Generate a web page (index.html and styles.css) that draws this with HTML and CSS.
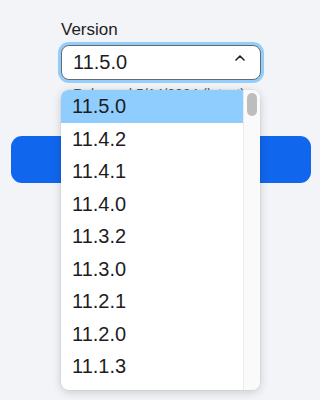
FILE: index.html
```html
<!DOCTYPE html>
<html>
<head>
<meta charset="utf-8">
<link rel="stylesheet" href="styles.css">
</head>
<body>
<div class="page">
  <div class="field">
    <label class="label">Version</label>
    <div class="select">
      <span class="value">11.5.0</span>
      <svg class="caret" width="10" height="6" viewBox="0 0 10 6"><path d="M1 5 L5 1 L9 5" fill="none" stroke="#222" stroke-width="1.6" stroke-linecap="round" stroke-linejoin="round"/></svg>
    </div>
    <div class="hint">Released 5/14/2024 (latest)</div>
  </div>
  <button class="primary">Install</button>
  <div class="dropdown">
    <ul class="list">
      <li class="item selected">11.5.0</li>
      <li class="item">11.4.2</li>
      <li class="item">11.4.1</li>
      <li class="item">11.4.0</li>
      <li class="item">11.3.2</li>
      <li class="item">11.3.0</li>
      <li class="item">11.2.1</li>
      <li class="item">11.2.0</li>
      <li class="item">11.1.3</li>
    </ul>
    <div class="scrollbar"><div class="thumb"></div></div>
  </div>
</div>
</body>
</html>
```
FILE: styles.css
```css
html, body {
  margin: 0;
  padding: 0;
  background: #f3f4f8;
  font-family: "Liberation Sans", Arial, sans-serif;
}
.page {
  position: relative;
  width: 315px;
  height: 400px;
  display: flex;
  flex-direction: column;
}
.field {
  display: flex;
  flex-direction: column;
  padding: 20px 0 0 61px;
  width: 200px;
}
.label {
  font-size: 17px;
  line-height: 20px;
  color: #1d1d1f;
  margin-bottom: 5px;
}
.select {
  box-sizing: border-box;
  height: 35px;
  border: 1.5px solid #6a6a6a;
  border-radius: 8px;
  background: #fff;
  box-shadow: 0 0 0 3px #93cdfb;
  display: flex;
  align-items: center;
  justify-content: space-between;
  padding: 0 15px 0 11px;
}
.value {
  font-size: 20px;
  color: #1d1d1f;
}
.caret {
  margin-top: -10px;
}
.hint {
  margin-top: 5px;
  padding-left: 12px;
  font-size: 14px;
  line-height: 18px;
  color: #5a5a5f;
  white-space: nowrap;
}
.primary {
  margin: 33px 4px 0 11px;
  height: 47px;
  border: none;
  border-radius: 11px;
  background: #1166ee;
  color: #fff;
  font-family: inherit;
  font-size: 17px;
}
.dropdown {
  position: absolute;
  top: 90px;
  left: 61px;
  width: 199px;
  height: 300px;
  background: #fff;
  border-radius: 8px;
  box-shadow: 0 2px 10px rgba(0, 0, 0, 0.18), 0 0 0 0.5px rgba(0, 0, 0, 0.06);
  overflow: hidden;
  display: flex;
}
.list {
  list-style: none;
  margin: 0;
  padding: 0;
  flex: 1;
}
.item {
  height: 32.5px;
  line-height: 32.5px;
  padding-left: 11px;
  font-size: 20px;
  color: #1d1d1f;
}
.item.selected {
  background: #8fcdfe;
}
.scrollbar {
  width: 16px;
  background: #fafafa;
  border-left: 1px solid #ebebeb;
  display: flex;
  justify-content: center;
  padding-top: 3px;
}
.thumb {
  width: 10px;
  height: 23px;
  border-radius: 5px;
  background: #bdbdbd;
}
```
